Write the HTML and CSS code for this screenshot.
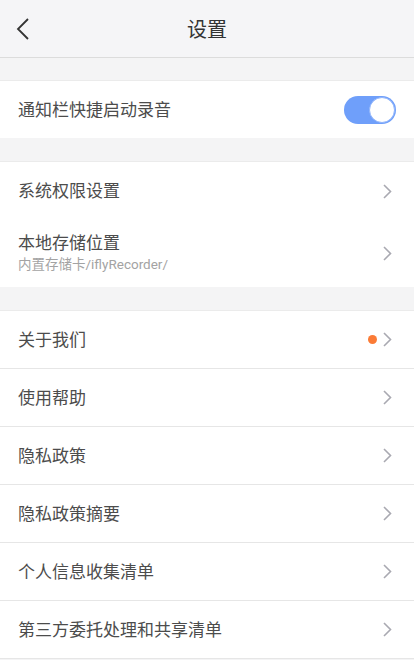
FILE: index.html
```html
<!DOCTYPE html>
<html lang="zh-CN">
<head>
    <meta charset="UTF-8">
    <meta name="viewport" content="width=device-width, initial-scale=1.0">
    <title>设置</title>
    <link rel="stylesheet" href="styles.css">
</head>
<body>

    <div class="topbar">
        <svg class="back" width="14" height="22" viewBox="0 0 14 22">
            <polyline points="12,1 2,11 12,21" fill="none" stroke="#333" stroke-width="1.8"/>
        </svg>
        <h1>设置</h1>
    </div>

    <div class="group first">
        <div class="row">
            <span class="label">通知栏快捷启动录音</span>
            <div class="switch on"><span class="knob"></span></div>
        </div>
    </div>

    <div class="group">
        <div class="row">
            <span class="label">系统权限设置</span>
            <svg class="arrow" width="9" height="15" viewBox="0 0 9 15"><polyline points="1,1 7.5,7.5 1,14" fill="none" stroke="#a9a9b1" stroke-width="1.6"/></svg>
        </div>
        <div class="row tall">
            <div class="texts">
                <span class="label">本地存储位置</span>
                <span class="sub">内置存储卡/iflyRecorder/</span>
            </div>
            <svg class="arrow" width="9" height="15" viewBox="0 0 9 15"><polyline points="1,1 7.5,7.5 1,14" fill="none" stroke="#a9a9b1" stroke-width="1.6"/></svg>
        </div>
    </div>

    <div class="group lined">
        <div class="row">
            <span class="label">关于我们</span>
            <span class="dot"></span>
            <svg class="arrow" width="9" height="15" viewBox="0 0 9 15"><polyline points="1,1 7.5,7.5 1,14" fill="none" stroke="#a9a9b1" stroke-width="1.6"/></svg>
        </div>
        <div class="row">
            <span class="label">使用帮助</span>
            <svg class="arrow" width="9" height="15" viewBox="0 0 9 15"><polyline points="1,1 7.5,7.5 1,14" fill="none" stroke="#a9a9b1" stroke-width="1.6"/></svg>
        </div>
        <div class="row">
            <span class="label">隐私政策</span>
            <svg class="arrow" width="9" height="15" viewBox="0 0 9 15"><polyline points="1,1 7.5,7.5 1,14" fill="none" stroke="#a9a9b1" stroke-width="1.6"/></svg>
        </div>
        <div class="row">
            <span class="label">隐私政策摘要</span>
            <svg class="arrow" width="9" height="15" viewBox="0 0 9 15"><polyline points="1,1 7.5,7.5 1,14" fill="none" stroke="#a9a9b1" stroke-width="1.6"/></svg>
        </div>
        <div class="row">
            <span class="label">个人信息收集清单</span>
            <svg class="arrow" width="9" height="15" viewBox="0 0 9 15"><polyline points="1,1 7.5,7.5 1,14" fill="none" stroke="#a9a9b1" stroke-width="1.6"/></svg>
        </div>
        <div class="row">
            <span class="label">第三方委托处理和共享清单</span>
            <svg class="arrow" width="9" height="15" viewBox="0 0 9 15"><polyline points="1,1 7.5,7.5 1,14" fill="none" stroke="#a9a9b1" stroke-width="1.6"/></svg>
        </div>
    </div>

</body>
</html>
```

FILE: styles.css
```css
body {
    margin: 0;
    background: #f4f4f5;
    font-family: Roboto, "Noto Sans CJK SC", sans-serif;
    color: #4c4c4c;
}
.topbar {
    position: relative;
    height: 57px;
    background: #f5f5f7;
    border-bottom: 1px solid #dcdcdc;
    display: flex;
    align-items: center;
    justify-content: center;
}
.topbar h1 {
    margin: 0;
    font-size: 20px;
    font-weight: normal;
    color: #333;
}
.back {
    position: absolute;
    left: 16px;
    top: 18px;
}
.group {
    margin-top: 23px;
    background: #fff;
    border-top: 1px solid #ebebeb;
}
.group.first {
    margin-top: 22px;
}
.row {
    display: flex;
    align-items: center;
    height: 57px;
    padding: 0 22px 0 18px;
}
.row.tall {
    height: 67px;
}
.row:first-child {
    height: 58px;
}
.group.first .row {
    height: 57px;
    padding-right: 18px;
}
.group.lined .row {
    height: 57px;
    border-bottom: 1px solid #e6e6e6;
}
.label {
    font-size: 17px;
    color: #4c4c4c;
    line-height: 24px;
}
.texts {
    display: flex;
    flex-direction: column;
    margin-top: -4px;
}
.sub {
    font-size: 13.5px;
    color: #a3a3a3;
    line-height: 18px;
}
.arrow {
    margin-left: auto;
}
.dot {
    margin-left: auto;
    width: 9px;
    height: 9px;
    border-radius: 50%;
    background: #fb7b36;
    margin-right: 6px;
}
.dot + .arrow {
    margin-left: 0;
}
.switch {
    margin-left: auto;
    width: 52px;
    height: 28px;
    border-radius: 14px;
    background: #6f9ffa;
    box-sizing: border-box;
    padding: 1px;
    display: flex;
    justify-content: flex-end;
}
.knob {
    width: 26px;
    height: 26px;
    border-radius: 50%;
    background: #fff;
    box-sizing: border-box;
    border: 1px solid #8fb4fb;
}
```
